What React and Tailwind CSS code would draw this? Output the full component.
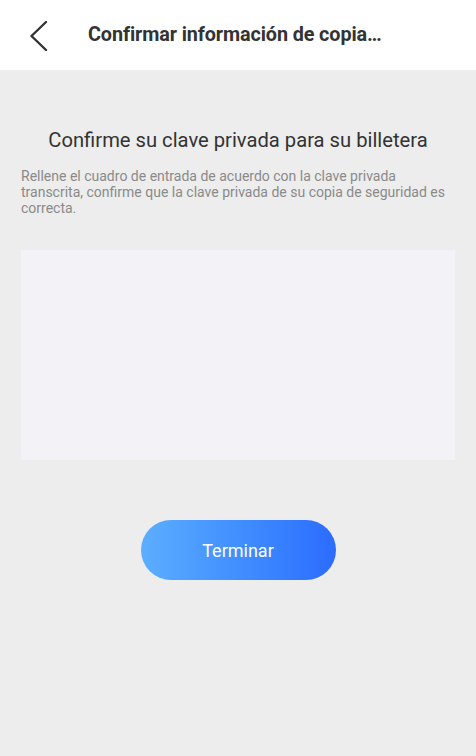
export default function App() {
  return (
    <div className="min-h-[756px] bg-[#ededed] flex flex-col" style={{ fontFamily: 'Roboto, "Liberation Sans", sans-serif' }}>
      <div className="h-[70px] bg-white flex items-center">
        <button className="w-[88px] h-[70px] flex items-center pl-[28px]">
          <svg width="22" height="32" viewBox="0 0 22 32" fill="none">
            <path d="M18 3 L3.5 17 L18 31" stroke="#333" strokeWidth="2.4" strokeLinecap="round" strokeLinejoin="round" />
          </svg>
        </button>
        <h1 className="text-[19.8px] font-bold text-[#333] leading-none tracking-[-0.1px]">Confirmar información de copia…</h1>
      </div>

      <div className="px-[21px] pt-[58px]">
        <h2 className="text-[20.2px] text-[#333] text-center leading-[24px]">Confirme su clave privada para su billetera</h2>
        <p className="mt-[16px] text-[14px] leading-[16px] text-[#8a8a8a]">
          Rellene el cuadro de entrada de acuerdo con la clave privada transcrita, confirme que la clave privada de su copia de seguridad es correcta.
        </p>
        <textarea className="mt-[34px] block w-full h-[210px] bg-[#f3f3f7] resize-none outline-none p-3 text-[15px] text-[#333]" />
        <div className="flex justify-center mt-[60px]">
          <button className="w-[195px] h-[60px] rounded-full bg-gradient-to-r from-[#5caeff] to-[#2c6bff] text-white text-[18px]">
            Terminar
          </button>
        </div>
      </div>
    </div>
  )
}
